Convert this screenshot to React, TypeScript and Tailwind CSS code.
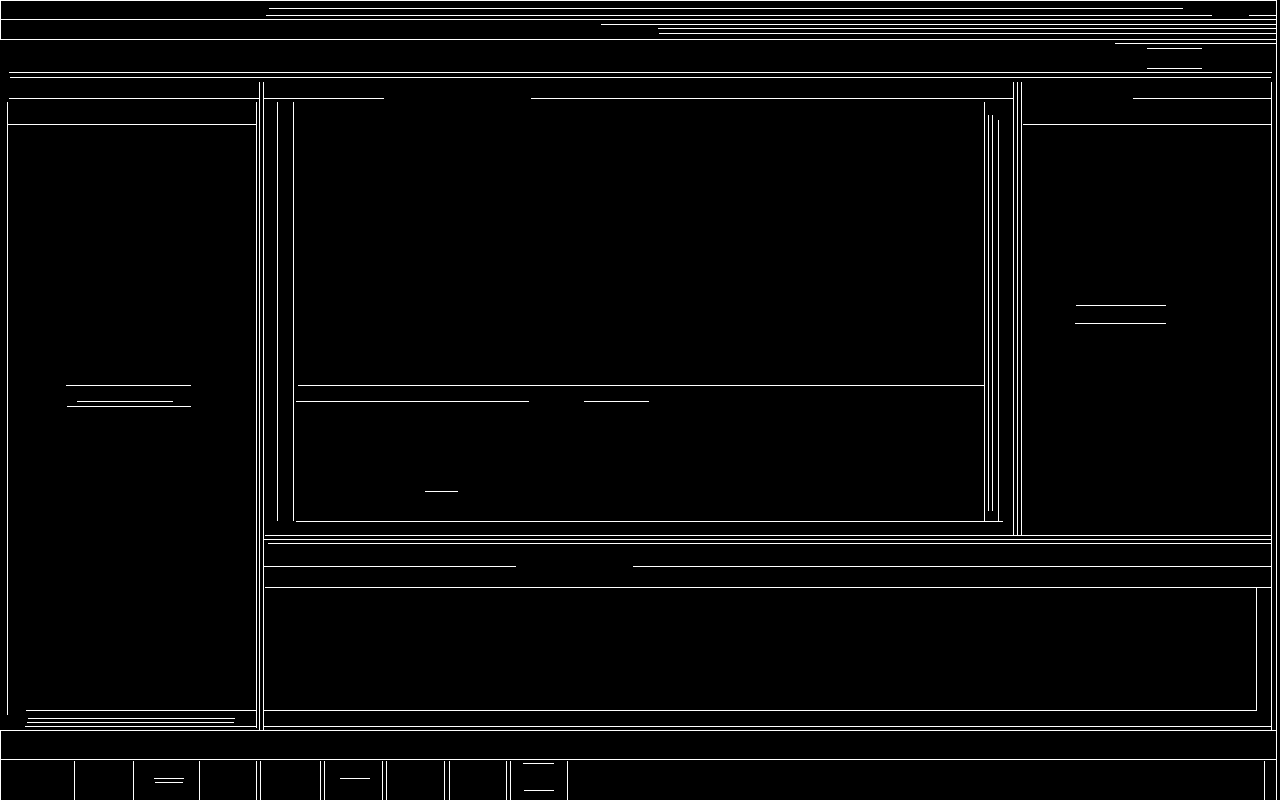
import React from "react";

function HLine({ className = "" }: { className?: string }) {
  return <div className={`h-px shrink-0 bg-white ${className}`} />;
}

function TitleBar() {
  return (
    <div className="h-[40px] shrink-0 border-t border-l border-white flex flex-col">
      {/* window title row */}
      <div className="h-[19px] border-b border-white flex flex-col pt-[7px]">
        <HLine className="ml-[268px] w-[914px]" />
        <div className="mt-[6px] flex h-px">
          <div className="ml-[265px] w-[946px] bg-white" />
          <div className="ml-[37px] flex-1 bg-white" />
        </div>
      </div>
      {/* menu row */}
      <div className="h-[20px] border-b border-white flex flex-col pt-[4px]">
        <div className="flex h-px">
          <div className="ml-[600px] flex-1 bg-white" />
        </div>
        <div className="mt-[3px] flex h-px">
          <div className="ml-[657px] flex-1 bg-white" />
        </div>
        <div className="mt-[4px] flex h-px">
          <div className="ml-[658px] flex-1 bg-white" />
        </div>
      </div>
    </div>
  );
}

function Toolbar() {
  return (
    <div className="h-[42px] shrink-0 flex flex-col pt-[3px]">
      <div className="flex h-px">
        <div className="ml-[1115px] flex-1 bg-white" />
      </div>
      <div className="mt-[4px] ml-[1147px] w-[55px] h-[21px] border-y border-white" />
      <HLine className="mt-[3px] ml-[9px] w-[1263px]" />
      <HLine className="mt-[4px] ml-[10px] w-[1261px]" />
    </div>
  );
}

function LeftPanel() {
  return (
    <div className="w-[259px] shrink-0 flex flex-col pt-[16px]">
      <HLine className="ml-[9px] w-[250px]" />
      <div className="mt-[3px] ml-[7px] w-[250px] h-[626px] flex">
        <div className="w-px h-[613px] shrink-0 bg-white" />
        <div className="flex-1 border-r border-white flex flex-col">
          <div className="h-[23px] shrink-0 border-b border-white" />
          <div className="flex-1 flex flex-col pb-[1px]">
            <HLine className="mt-[260px] ml-[58px] w-[125px]" />
            <HLine className="mt-[15px] ml-[69px] w-[96px]" />
            <HLine className="mt-[4px] ml-[59px] w-[124px]" />
            <div className="flex-1" />
            <div className="flex h-px">
              <div className="ml-[18px] flex-1 bg-white" />
            </div>
            <HLine className="mt-[7px] ml-[20px] w-[207px]" />
            <HLine className="mt-[3px] ml-[19px] w-[207px]" />
            <div className="mt-[3px] flex h-px">
              <div className="ml-[17px] flex-1 bg-white" />
            </div>
          </div>
        </div>
      </div>
    </div>
  );
}

function Editor() {
  return (
    <div className="w-[750px] shrink-0 border-r border-white flex flex-col pt-[16px]">
      {/* tab strip */}
      <div className="flex h-px">
        <div className="w-[120px] bg-white" />
        <div className="ml-[147px] flex-1 bg-white" />
      </div>
      <div className="mt-[3px] ml-[13px] w-[726px] flex flex-col">
        <div className="h-[419px] flex">
          <div className="w-[17px] border-x border-white" />
          <div className="w-[691px] border-r border-white flex flex-col">
            <div className="mt-[283px] flex h-px">
              <div className="ml-[4px] flex-1 bg-white" />
            </div>
            <div className="mt-[15px] flex h-px">
              <div className="ml-[2px] w-[233px] bg-white" />
              <div className="ml-[55px] w-[65px] bg-white" />
            </div>
            <HLine className="mt-[89px] ml-[131px] w-[33px]" />
          </div>
          <div className="w-[14px] flex">
            <div className="ml-[3px] mt-[13px] h-[396px] w-[5px] border-x border-white" />
            <div className="ml-[5px] mt-[18px] h-[401px] w-px bg-white" />
          </div>
        </div>
        <HLine className="ml-[19px] w-[707px]" />
      </div>
    </div>
  );
}

function Inspector() {
  return (
    <div className="w-[250px] shrink-0 border-l border-white flex flex-col pt-[16px]">
      <div className="flex h-px">
        <div className="ml-[111px] flex-1 bg-white" />
      </div>
      <div className="mt-[25px] flex h-px">
        <div className="ml-[1px] flex-1 bg-white" />
      </div>
      <HLine className="mt-[180px] ml-[54px] w-[90px]" />
      <HLine className="mt-[17px] ml-[53px] w-[91px]" />
    </div>
  );
}

function BottomPanel() {
  return (
    <div className="h-[186px] shrink-0 flex flex-col pt-[22px]">
      <div className="flex h-px">
        <div className="w-[252px] bg-white" />
        <div className="ml-[117px] flex-1 bg-white" />
      </div>
      <div className="mt-[20px] flex h-px">
        <div className="ml-[1px] flex-1 bg-white" />
      </div>
      <div className="w-[993px] h-[123px] border-r border-b border-white" />
      <HLine className="mt-[15px]" />
    </div>
  );
}

function Workspace() {
  return (
    <div className="h-[649px] shrink-0 border-b border-white flex">
      <LeftPanel />
      <div className="w-[5px] shrink-0 border-x border-white" />
      <div className="w-[1008px] shrink-0 border-r border-white flex flex-col">
        <div className="h-[453px] shrink-0 flex">
          <Editor />
          <div className="w-[3px]" />
          <div className="w-px bg-white" />
          <div className="w-[3px]" />
          <Inspector />
        </div>
        <div className="h-[9px] shrink-0 flex flex-col">
          <div className="flex h-px">
            <div className="ml-[1px] flex-1 bg-white" />
          </div>
          <HLine className="mt-[3px]" />
          <div className="mt-[3px] flex h-px">
            <div className="ml-[4px] flex-1 bg-white" />
          </div>
        </div>
        <BottomPanel />
      </div>
    </div>
  );
}

const slots = [59, 66, 57, 4, 60, 4, 58, 4, 58, 5, 57, 4, 57, 697];

function Taskbar() {
  return (
    <div className="h-[41px] shrink-0 border-t border-l border-white flex pt-[1px]">
      <div className="w-[73px] shrink-0" />
      {slots.map((w, i) => (
        <div
          key={i}
          className="shrink-0 border-l border-white flex flex-col"
          style={{ width: w }}
        >
          {i === 1 && (
            <>
              <HLine className="mt-[17px] ml-[20px] w-[30px]" />
              <HLine className="mt-[3px] ml-[21px] w-[28px]" />
            </>
          )}
          {i === 6 && <HLine className="mt-[17px] ml-[15px] w-[30px]" />}
          {i === 12 && (
            <>
              <HLine className="mt-[2px] ml-[12px] w-[31px]" />
              <HLine className="mt-[26px] ml-[13px] w-[30px]" />
            </>
          )}
        </div>
      ))}
      <div className="flex-1 border-l border-white" />
    </div>
  );
}

export default function App() {
  return (
    <div className="w-[1280px] h-[800px] bg-black overflow-hidden">
      <div className="w-[1277px] h-full border-r border-white flex flex-col">
        <TitleBar />
        <Toolbar />
        <Workspace />
        <div className="h-[28px] shrink-0 border-l border-white" />
        <Taskbar />
      </div>
    </div>
  );
}
